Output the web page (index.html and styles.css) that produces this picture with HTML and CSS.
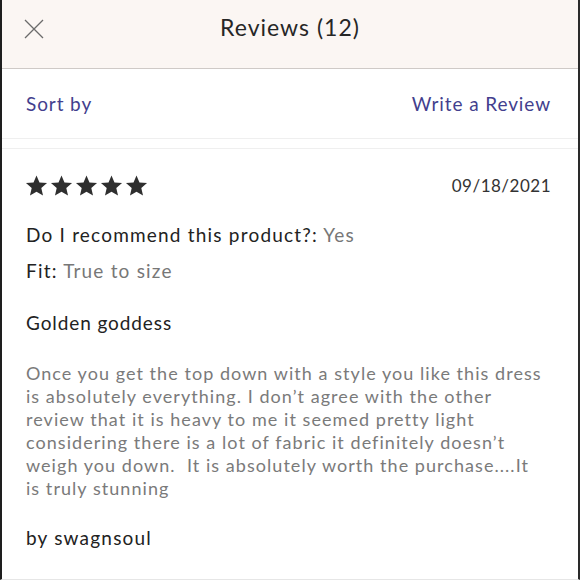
FILE: index.html
```html
<!DOCTYPE html>
<html lang="en">
<head>
<meta charset="utf-8">
<title>Reviews (12)</title>
<link rel="stylesheet" href="styles.css">
</head>
<body>
<div class="frame">
  <header class="topbar">
    <button class="close" aria-label="Close">
      <svg width="20" height="20" viewBox="0 0 20 20"><path d="M1 1 L19 19 M19 1 L1 19" stroke="#6b6b6b" stroke-width="1.3" fill="none"/></svg>
    </button>
    <h1 class="title">Reviews (12)</h1>
    <span></span>
  </header>
  <div class="actions">
    <a class="link">Sort by</a>
    <a class="link">Write a Review</a>
  </div>
  <article class="review">
    <div class="review-head">
      <div class="stars">
        <svg viewBox="0 0 24 24"><path d="M12 1.5l3.1 7.3 7.9.7-6 5.2 1.8 7.8L12 18.4l-6.8 4.1L7 14.7 1 9.5l7.9-.7z"/></svg>
        <svg viewBox="0 0 24 24"><path d="M12 1.5l3.1 7.3 7.9.7-6 5.2 1.8 7.8L12 18.4l-6.8 4.1L7 14.7 1 9.5l7.9-.7z"/></svg>
        <svg viewBox="0 0 24 24"><path d="M12 1.5l3.1 7.3 7.9.7-6 5.2 1.8 7.8L12 18.4l-6.8 4.1L7 14.7 1 9.5l7.9-.7z"/></svg>
        <svg viewBox="0 0 24 24"><path d="M12 1.5l3.1 7.3 7.9.7-6 5.2 1.8 7.8L12 18.4l-6.8 4.1L7 14.7 1 9.5l7.9-.7z"/></svg>
        <svg viewBox="0 0 24 24"><path d="M12 1.5l3.1 7.3 7.9.7-6 5.2 1.8 7.8L12 18.4l-6.8 4.1L7 14.7 1 9.5l7.9-.7z"/></svg>
      </div>
      <span class="date">09/18/2021</span>
    </div>
    <p class="attr recommend">Do I recommend this product?: <span class="val">Yes</span></p>
    <p class="attr fit">Fit: <span class="val">True to size</span></p>
    <h2 class="headline">Golden goddess</h2>
    <p class="body">Once you get the top down with a style you like this dress is absolutely everything. I don’t agree with the other review that it is heavy to me it seemed pretty light considering there is a lot of fabric it definitely doesn’t weigh you down.&nbsp; It is absolutely worth the purchase....It is truly stunning</p>
    <p class="author">by swagnsoul</p>
  </article>
</div>
</body>
</html>
```

FILE: styles.css
```css
* { box-sizing: border-box; }
html, body { margin: 0; padding: 0; background: #fff; }
body { font-family: Lato, "Noto Sans", sans-serif; }

.frame {
  width: 580px;
  height: 580px;
  border-left: 2px solid #1e1e1e;
  border-right: 2px solid #2a2a2a;
  border-bottom: 1px solid #e6e6e6;
  overflow: hidden;
}

.topbar {
  height: 69px;
  background: #fbf6f3;
  border-bottom: 1px solid #cfcac7;
  display: grid;
  grid-template-columns: 1fr auto 1fr;
  align-items: center;
  padding: 0 22px;
}
.close {
  background: none;
  border: 0;
  padding: 0;
  width: 20px;
  height: 20px;
  margin-top: -10px;
  justify-self: start;
  display: flex;
}
.title {
  margin: -14px 0 0;
  font-weight: 400;
  font-size: 23px;
  color: #262626;
  letter-spacing: 1px;
}

.actions {
  height: 70px;
  display: flex;
  justify-content: space-between;
  align-items: center;
  padding: 0 27px 0 24px;
  border-bottom: 1px solid #efefef;
}
.link {
  color: #433f8e;
  font-size: 19px;
  letter-spacing: 0.9px;
  margin-top: -1px;
}

.review {
  margin-top: 9px;
  border-top: 1px solid #efefef;
  padding: 26px 27px 0 24px;
}
.review-head {
  display: flex;
  justify-content: space-between;
  align-items: center;
  height: 20px;
}
.stars { display: flex; gap: 2px; margin-left: -1px; }
.stars svg { width: 23px; height: 23px; fill: #2f2f2f; }
.date { font-size: 17px; color: #333; letter-spacing: 0.5px; }

.attr {
  margin: 0;
  font-size: 19px;
  line-height: 24px;
  letter-spacing: 1.2px;
  color: #222;
}
.recommend { margin-top: 28px; }
.fit { margin-top: 12px; }
.val { color: #777; }

.headline {
  margin: 28px 0 0;
  font-weight: 400;
  font-size: 19px;
  line-height: 23px;
  letter-spacing: 0.9px;
  color: #222;
}
.body {
  margin: 28px 3px 0 0;
  font-size: 18px;
  line-height: 23px;
  letter-spacing: 1.05px;
  color: #7a7a7a;
}
.author {
  margin: 26px 0 0;
  font-size: 19px;
  line-height: 24px;
  letter-spacing: 1.2px;
  color: #222;
}
```
